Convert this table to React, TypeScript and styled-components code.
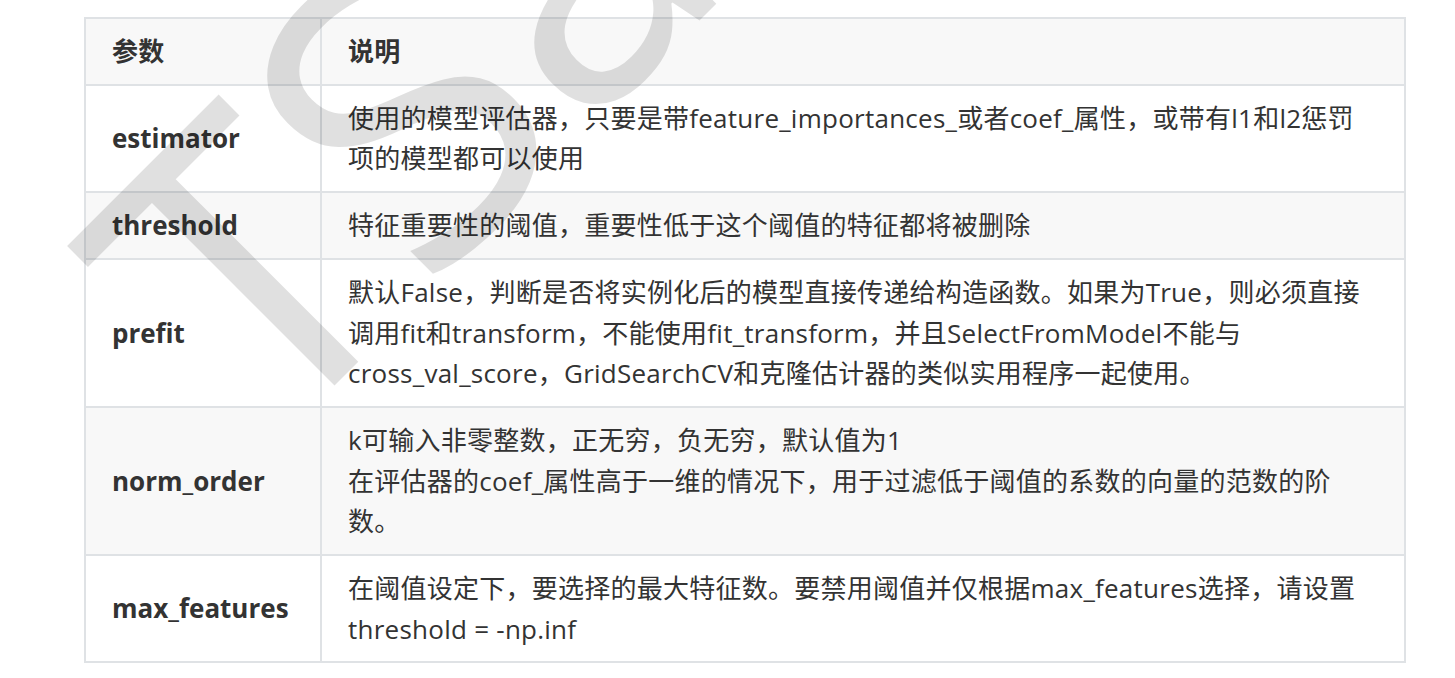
import React from "react";
import styled, { createGlobalStyle } from "styled-components";

const GlobalStyle = createGlobalStyle`
  html, body {
    margin: 0;
    padding: 0;
    background: #ffffff;
  }
  body {
    font-family: "Open Sans", "Noto Sans CJK SC", sans-serif;
    color: #333333;
  }
`;

const Page = styled.div`
  position: relative;
  width: 1455px;
  height: 678px;
  overflow: hidden;
  padding: 17px 0 0 84px;
  box-sizing: border-box;
`;

const Table = styled.table`
  width: 1322px;
  border-collapse: collapse;
  font-size: 26px;
  line-height: 40.7px;
  letter-spacing: 0.25px;
`;

const Row = styled.tr<{ $shade?: boolean }>`
  background: ${(p) => (p.$shade ? "#f8f8f8" : "#ffffff")};
`;

const HeadCell = styled.th<{ $w?: number }>`
  border: 2px solid #dfe2e5;
  padding: 12px 26px;
  text-align: left;
  font-weight: bold;
  width: ${(p) => (p.$w ? `${p.$w}px` : "auto")};
  box-sizing: border-box;
`;

const NameCell = styled.td`
  border: 2px solid #dfe2e5;
  padding: 12px 26px;
  font-weight: bold;
  letter-spacing: 0;
  vertical-align: middle;
`;

const DescCell = styled.td`
  border: 2px solid #dfe2e5;
  padding: 12px 26px;
  vertical-align: middle;
`;

const Line = styled.span`
  display: block;
  white-space: nowrap;
`;

const Watermark = styled.svg`
  position: absolute;
  left: 0;
  top: 0;
  pointer-events: none;
`;

const rows: { name: string; lines: string[] }[] = [
  {
    name: "estimator",
    lines: [
      "使用的模型评估器，只要是带feature_importances_或者coef_属性，或带有l1和l2惩罚",
      "项的模型都可以使用",
    ],
  },
  {
    name: "threshold",
    lines: ["特征重要性的阈值，重要性低于这个阈值的特征都将被删除"],
  },
  {
    name: "prefit",
    lines: [
      "默认False，判断是否将实例化后的模型直接传递给构造函数。如果为True，则必须直接",
      "调用fit和transform，不能使用fit_transform，并且SelectFromModel不能与",
      "cross_val_score，GridSearchCV和克隆估计器的类似实用程序一起使用。",
    ],
  },
  {
    name: "norm_order",
    lines: [
      "k可输入非零整数，正无穷，负无穷，默认值为1",
      "在评估器的coef_属性高于一维的情况下，用于过滤低于阈值的系数的向量的范数的阶",
      "数。",
    ],
  },
  {
    name: "max_features",
    lines: [
      "在阈值设定下，要选择的最大特征数。要禁用阈值并仅根据max_features选择，请设置",
      "threshold = -np.inf",
    ],
  },
];

export default function App() {
  return (
    <>
      <GlobalStyle />
      <Page>
        <Table>
          <thead>
            <Row $shade>
              <HeadCell $w={236}>参数</HeadCell>
              <HeadCell>说明</HeadCell>
            </Row>
          </thead>
          <tbody>
            {rows.map((r, i) => (
              <Row key={r.name} $shade={i % 2 === 1}>
                <NameCell>{r.name}</NameCell>
                <DescCell>
                  {r.lines.map((l) => (
                    <Line key={l}>{l}</Line>
                  ))}
                </DescCell>
              </Row>
            ))}
          </tbody>
        </Table>
        <Watermark width="1455" height="678" viewBox="0 0 1455 678">
          <text
            transform="translate(268 452) rotate(-45)"
            fontFamily="Open Sans, sans-serif"
            fontSize="403"
            fill="#000000"
            fillOpacity="0.12"
          >
            TSa
          </text>
        </Watermark>
      </Page>
    </>
  );
}
